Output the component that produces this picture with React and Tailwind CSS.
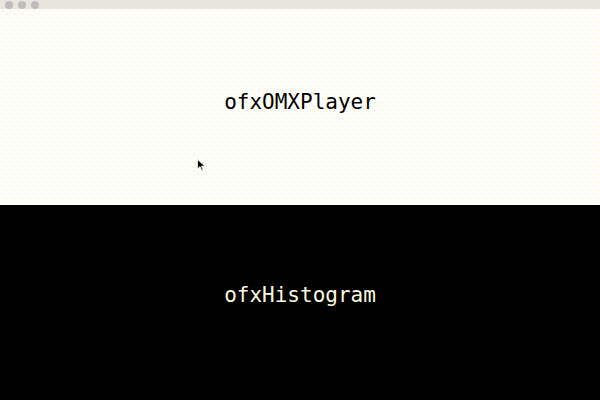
export default function App() {
  return (
    <div className="w-[600px] h-[400px] flex flex-col overflow-hidden font-['DejaVu_Sans_Mono',monospace]">
      {/* window title bar */}
      <div className="h-[9px] bg-[#e8e6dc] flex items-center gap-[5px] pl-[5px]">
        <span className="w-[8px] h-[8px] rounded-full bg-[#bdbdbd]" />
        <span className="w-[8px] h-[8px] rounded-full bg-[#bdbdbd]" />
        <span className="w-[8px] h-[8px] rounded-full bg-[#bdbdbd]" />
      </div>

      {/* first app window */}
      <div className="relative h-[196px] flex items-center justify-center pb-[9px] bg-[#fdfdfb] bg-[radial-gradient(circle_at_0.5px_0.5px,#f8ea5c_0.6px,transparent_0.7px),radial-gradient(circle_at_0.5px_0.5px,#f8ea5c_0.6px,transparent_0.7px)] bg-[length:8px_8px] bg-[position:2px_1px,6px_5px]">
        <span className="text-[21px] text-black">ofxOMXPlayer</span>
        <svg className="absolute left-[197px] top-[150px]" width="9" height="13" viewBox="0 0 9 13">
          <path d="M0.5 0.5 L0.5 10 L3 7.6 L4.8 11.8 L6.2 11.2 L4.5 7.2 L8 7.2 Z" fill="#000" stroke="#fff" strokeWidth="0.8" />
        </svg>
      </div>

      {/* second app window */}
      <div className="flex-1 flex items-center justify-center pb-[13px] bg-black">
        <span className="text-[21px] text-[#fbfadc]">ofxHistogram</span>
      </div>
    </div>
  );
}
